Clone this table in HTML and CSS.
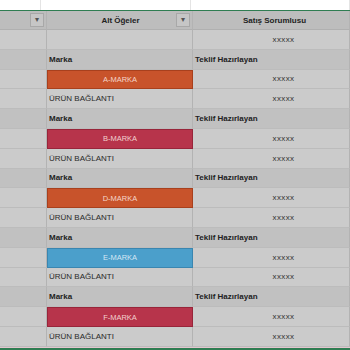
FILE: index.html
```html
<!DOCTYPE html>
<html lang="tr">

<head>
    <meta charset="UTF-8">
    <meta name="viewport" content="width=device-width, initial-scale=1.0">
    <title>Marka Listesi</title>
    <link rel="stylesheet" href="styles.css">
</head>

<body>
    <div class="formula-area">
        <div class="fa-col fa-a"></div>
        <div class="fa-col fa-b"></div>
        <div class="fa-col fa-c"></div>
    </div>

    <div class="sheet">
        <div class="row head">
            <div class="cell col-a"><span class="drop">&#9662;</span></div>
            <div class="cell col-b"><span class="head-text">Alt Öğeler</span><span class="drop">&#9662;</span></div>
            <div class="cell col-c"><span class="head-text">Satış Sorumlusu</span></div>
        </div>

        <div class="row">
            <div class="cell col-a"></div>
            <div class="cell col-b"></div>
            <div class="cell col-c val">xxxxx</div>
        </div>

        <!-- A -->
        <div class="row band">
            <div class="cell col-a"></div>
            <div class="cell col-b lbl">Marka</div>
            <div class="cell col-c lbl">Teklif Hazırlayan</div>
        </div>
        <div class="row">
            <div class="cell col-a"></div>
            <div class="cell col-b brand orange">A-MARKA</div>
            <div class="cell col-c val">xxxxx</div>
        </div>
        <div class="row">
            <div class="cell col-a"></div>
            <div class="cell col-b link">ÜRÜN BAĞLANTI</div>
            <div class="cell col-c val">xxxxx</div>
        </div>

        <!-- B -->
        <div class="row band">
            <div class="cell col-a"></div>
            <div class="cell col-b lbl">Marka</div>
            <div class="cell col-c lbl">Teklif Hazırlayan</div>
        </div>
        <div class="row">
            <div class="cell col-a"></div>
            <div class="cell col-b brand crimson">B-MARKA</div>
            <div class="cell col-c val">xxxxx</div>
        </div>
        <div class="row">
            <div class="cell col-a"></div>
            <div class="cell col-b link">ÜRÜN BAĞLANTI</div>
            <div class="cell col-c val">xxxxx</div>
        </div>

        <!-- D -->
        <div class="row band">
            <div class="cell col-a"></div>
            <div class="cell col-b lbl">Marka</div>
            <div class="cell col-c lbl">Teklif Hazırlayan</div>
        </div>
        <div class="row">
            <div class="cell col-a"></div>
            <div class="cell col-b brand orange">D-MARKA</div>
            <div class="cell col-c val">xxxxx</div>
        </div>
        <div class="row">
            <div class="cell col-a"></div>
            <div class="cell col-b link">ÜRÜN BAĞLANTI</div>
            <div class="cell col-c val">xxxxx</div>
        </div>

        <!-- E -->
        <div class="row band">
            <div class="cell col-a"></div>
            <div class="cell col-b lbl">Marka</div>
            <div class="cell col-c lbl">Teklif Hazırlayan</div>
        </div>
        <div class="row">
            <div class="cell col-a"></div>
            <div class="cell col-b brand blue">E-MARKA</div>
            <div class="cell col-c val">xxxxx</div>
        </div>
        <div class="row">
            <div class="cell col-a"></div>
            <div class="cell col-b link">ÜRÜN BAĞLANTI</div>
            <div class="cell col-c val">xxxxx</div>
        </div>

        <!-- F -->
        <div class="row band">
            <div class="cell col-a"></div>
            <div class="cell col-b lbl">Marka</div>
            <div class="cell col-c lbl">Teklif Hazırlayan</div>
        </div>
        <div class="row">
            <div class="cell col-a"></div>
            <div class="cell col-b brand crimson">F-MARKA</div>
            <div class="cell col-c val">xxxxx</div>
        </div>
        <div class="row">
            <div class="cell col-a"></div>
            <div class="cell col-b link">ÜRÜN BAĞLANTI</div>
            <div class="cell col-c val">xxxxx</div>
        </div>
    </div>

    <div class="bottom-edge"></div>
</body>

</html>
```

FILE: styles.css
```css
body {
    margin: 0;
    width: 350px;
    height: 350px;
    overflow: hidden;
    background: #ffffff;
    font-family: "Liberation Sans", Arial, sans-serif;
    font-size: 8px;
    color: #222;
}

/* white strip above the sheet with faint grid lines */
.formula-area {
    display: flex;
    height: 10px;
    border-bottom: 1px solid #2f7d52;
}

.fa-col {
    border-right: 1px solid #e4e4e4;
}

.fa-a {
    width: 40px;
}

.fa-b {
    width: 149px;
}

.fa-c {
    flex: 1;
}

.sheet {
    width: 350px;
    background: #cbcbcb;
}

.row {
    display: flex;
    height: 19.8px;
}

.row.head {
    height: 19px;
    background: #bdbdbd;
}

.row.band {
    background: #c1c1c1;
}

.cell {
    box-sizing: border-box;
    display: flex;
    align-items: center;
    border-right: 1px solid #b3b3b3;
    border-bottom: 1px solid #bcbcbc;
    position: relative;
    white-space: nowrap;
}

.col-a {
    width: 47px;
}

.col-b {
    width: 146px;
    padding-left: 2px;
}

.col-c {
    flex: 1;
    padding-left: 2px;
}

.head .cell {
    justify-content: center;
    font-weight: bold;
    border-bottom-color: #b0b0b0;
}

.head .col-c {
    padding-left: 7px;
}

/* filter dropdown buttons in the header */
.drop {
    position: absolute;
    right: 2px;
    top: 2px;
    width: 14px;
    height: 14px;
    box-sizing: border-box;
    border: 1px solid #a8a8a8;
    background: #c6c6c6;
    color: #555;
    font-size: 8px;
    line-height: 12px;
    text-align: center;
    font-weight: normal;
}

.lbl {
    font-weight: bold;
}

.val {
    justify-content: center;
    padding-left: 25px;
    color: #333;
    letter-spacing: 0.4px;
}

.link {
    color: #2a2a2a;
}

.brand {
    justify-content: center;
    color: rgba(255, 236, 230, 0.85);
    border: 1px solid;
    padding-left: 0;
    font-size: 7.5px;
}

.orange {
    background: #c8532b;
    border-color: #a8401d;
}

.crimson {
    background: #b7344b;
    border-color: #98253a;
}

.blue {
    background: #4b9fcb;
    border-color: #3a86b0;
    color: rgba(235, 245, 252, 0.85);
}

.bottom-edge {
    height: 1px;
    background: #e2c6cf;
    border-bottom: 2px solid #2f7d52;
}
```
